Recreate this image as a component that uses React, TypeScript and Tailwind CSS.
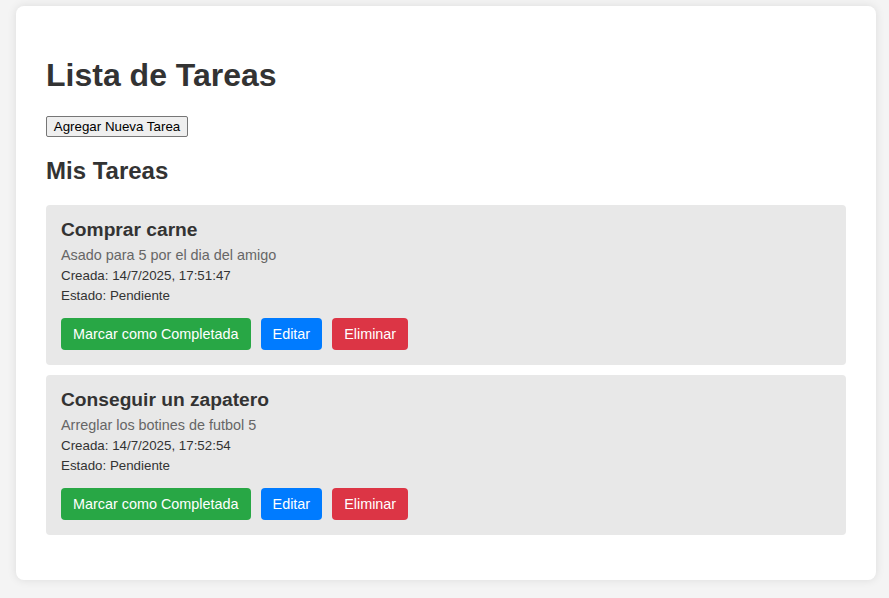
import React from "react";

const tasks = [
  {
    title: "Comprar carne",
    desc: "Asado para 5 por el dia del amigo",
    created: "14/7/2025, 17:51:47",
    status: "Pendiente",
  },
  {
    title: "Conseguir un zapatero",
    desc: "Arreglar los botines de futbol 5",
    created: "14/7/2025, 17:52:54",
    status: "Pendiente",
  },
];

export default function App() {
  return (
    <div
      className="min-h-[598px] bg-[#f4f4f4] pt-[6px] pl-[16px]"
      style={{ fontFamily: '"Liberation Sans", Arial, sans-serif' }}
    >
      <div className="w-[860px] rounded-[8px] bg-white px-[30px] pt-[30px] pb-[15px] shadow-[0_0_10px_rgba(0,0,0,0.1)]">
        <h1 className="my-[21.44px] text-[32px] font-bold leading-[36.8px] text-[#333]">
          Lista de Tareas
        </h1>
        <button className="block h-[21px] w-[142px] rounded-[2px] border border-[#767676] bg-[#efefef] px-[6px] text-[13.33px] leading-[15px] text-black">
          Agregar Nueva Tarea
        </button>
        <h2 className="mt-[20.2px] mb-[20.6px] text-[24px] font-bold leading-[27.6px] text-[#333]">
          Mis Tareas
        </h2>
        <div className="flex flex-col gap-[10px]">
          {tasks.map((t) => (
            <div
              key={t.title}
              className="h-[160px] w-[800px] rounded-[4px] bg-[#e8e8e8] px-[15px] pt-[14px]"
            >
              <h3 className="text-[19.2px] font-bold leading-[22px] text-[#333]">
                {t.title}
              </h3>
              <p className="mt-[6px] text-[14.4px] leading-[16.5px] text-[#666]">
                {t.desc}
              </p>
              <p className="mt-[4px] text-[13.33px] leading-[15px] text-[#333]">
                Creada: {t.created}
              </p>
              <p className="mt-[5px] text-[13.33px] leading-[15px] text-[#333]">
                Estado: {t.status}
              </p>
              <div className="mt-[15px] flex gap-[10px]">
                <button className="h-[32px] rounded-[4px] bg-[#28a745] px-[12px] text-[14.4px] leading-[16px] text-white">
                  Marcar como Completada
                </button>
                <button className="h-[32px] rounded-[4px] bg-[#007bff] px-[12px] text-[14.4px] leading-[16px] text-white">
                  Editar
                </button>
                <button className="h-[32px] rounded-[4px] bg-[#dc3545] px-[12px] text-[14.4px] leading-[16px] text-white">
                  Eliminar
                </button>
              </div>
            </div>
          ))}
        </div>
        <div className="h-[30px]" />
      </div>
    </div>
  );
}
